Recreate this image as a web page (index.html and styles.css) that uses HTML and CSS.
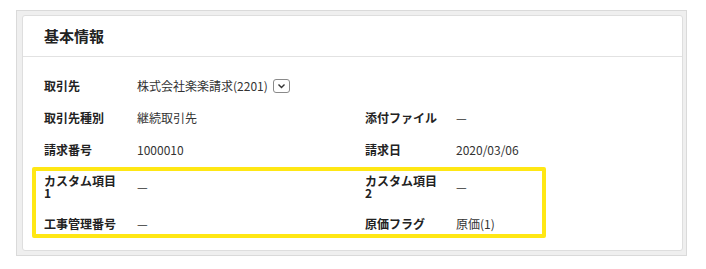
FILE: index.html
```html
<!DOCTYPE html>
<html lang="ja">
<head>
  <meta charset="UTF-8" />
  <title>基本情報</title>
  <link rel="stylesheet" href="styles.css">
</head>
<body>
  <div class="frame">
    <div class="card">
      <div class="card-header">基本情報</div>

      <div class="card-body">
        <div class="fields">
          <div class="label">取引先</div>
          <div class="value">
            株式会社楽楽請求(2201)
            <span class="toggle">
              <svg width="9" height="6" viewBox="0 0 9 6"><path d="M1.5 1.5 L4.5 4.5 L7.5 1.5" fill="none" stroke="#333" stroke-width="1.4"/></svg>
            </span>
          </div>
          <div class="label"></div>
          <div class="value"></div>

          <div class="label">取引先種別</div>
          <div class="value">継続取引先</div>
          <div class="label">添付ファイル</div>
          <div class="value">—</div>

          <div class="label">請求番号</div>
          <div class="value">1000010</div>
          <div class="label">請求日</div>
          <div class="value">2020/03/06</div>

          <div class="label">カスタム項目1</div>
          <div class="value">—</div>
          <div class="label">カスタム項目2</div>
          <div class="value">—</div>

          <div class="label">工事管理番号</div>
          <div class="value">—</div>
          <div class="label">原価フラグ</div>
          <div class="value">原価(1)</div>
        </div>

        <!-- annotation box over the custom rows -->
        <div class="highlight"></div>
      </div>
    </div>
  </div>
</body>
</html>
```

FILE: styles.css
```css
body {
  margin: 0;
  background: #fff;
  font-family: "Noto Sans CJK JP", "Noto Sans", sans-serif;
  color: #333;
}

.frame {
  margin: 10px 19px 0 16px;
  padding: 4px 3px 4px 5px;
  background: #efefef;
  border: 1px solid #dadada;
}

.card {
  background: #fff;
  border: 1px solid #dedede;
  border-radius: 3px;
}

.card-header {
  height: 40px;
  line-height: 40px;
  padding-left: 21px;
  font-size: 15px;
  font-weight: bold;
  color: #222;
  border-bottom: 1px solid #e2e2e2;
}

.card-body {
  position: relative;
  padding: 13px 0 10px 21px;
}

.fields {
  display: grid;
  grid-template-columns: 93px 228px 91px 1fr;
  align-items: center;
}

.label,
.value {
  padding: 9px 0;
  font-size: 12px;
  min-height: 14px;
}

.label {
  font-weight: bold;
  color: #222;
  line-height: 12px;
  padding-right: 16px;
  display: flex;
  align-items: center;
}

.value {
  line-height: 14px;
  display: flex;
  align-items: center;
}

.toggle {
  display: inline-flex;
  align-items: center;
  justify-content: center;
  width: 15px;
  height: 12px;
  margin-left: 5px;
  border: 1px solid #8a8a8a;
  border-radius: 3px;
}

.highlight {
  position: absolute;
  left: 9px;
  top: 110px;
  width: 506px;
  height: 63px;
  border: 4px solid #ffe714;
  border-radius: 2px;
  pointer-events: none;
}
```
